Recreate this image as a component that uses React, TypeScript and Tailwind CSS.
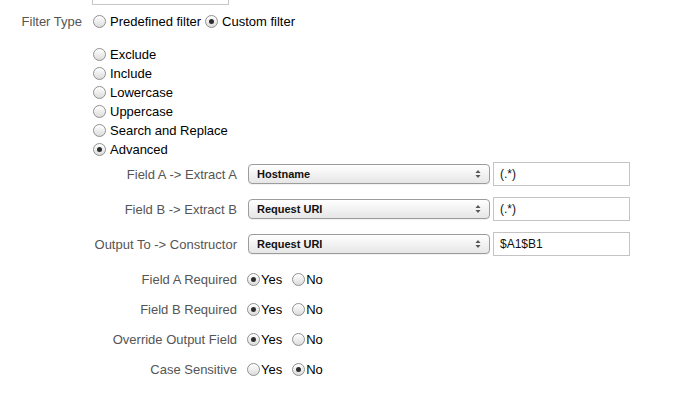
import React from "react";

const FONT = { fontFamily: '"Liberation Sans", Arial, sans-serif' };

function Radio({ checked }: { checked?: boolean }) {
  return (
    <span className="relative inline-flex h-[13px] w-[13px] shrink-0 items-center justify-center rounded-full border border-[#8f8f8f] bg-gradient-to-b from-white to-[#dcdcdc] shadow-[inset_0_1px_1px_rgba(255,255,255,0.9)]">
      {checked && <span className="h-[5px] w-[5px] rounded-full bg-[#2e2e2e]" />}
    </span>
  );
}

function RadioOption({ label, checked }: { label: string; checked?: boolean }) {
  return (
    <label className="flex items-center gap-[4px] text-black">
      <Radio checked={checked} />
      <span>{label}</span>
    </label>
  );
}

function SelectBox({ value }: { value: string }) {
  return (
    <div className="flex h-[20px] w-[242px] items-center justify-between rounded-[4px] border border-[#9c9c9c] bg-gradient-to-b from-white to-[#e6e6e6] pl-[8px] pr-[8px] shadow-[0_1px_0_rgba(0,0,0,0.05)]">
      <span className="text-[11px] font-bold text-[#111]">{value}</span>
      <svg width="6" height="10" viewBox="0 0 6 10">
        <path d="M3 1 L5.5 4 H0.5 Z" fill="#555" />
        <path d="M3 9 L5.5 6 H0.5 Z" fill="#555" />
      </svg>
    </div>
  );
}

function FieldRow({ label, select, text }: { label: string; select: string; text: string }) {
  return (
    <div className="flex h-[24px] items-center">
      <div className="w-[237px] text-right text-[#555]">{label}</div>
      <div className="ml-[11px] flex items-center gap-[3px]">
        <SelectBox value={select} />
        <div className="flex h-[24px] w-[137px] items-center border border-[#c4c4c4] bg-white px-[6px] text-[12px] text-[#111]">
          {text}
        </div>
      </div>
    </div>
  );
}

function YesNoRow({ label, yes }: { label: string; yes: boolean }) {
  return (
    <div className="flex h-[20px] items-center">
      <div className="w-[237px] text-right text-[#555]">{label}</div>
      <div className="ml-[10px] flex items-center">
        <label className="flex items-center gap-[1px] text-black">
          <Radio checked={yes} />
          <span>Yes</span>
        </label>
        <label className="ml-[10px] flex items-center gap-[1px] text-black">
          <Radio checked={!yes} />
          <span>No</span>
        </label>
      </div>
    </div>
  );
}

export default function App() {
  return (
    <div className="h-[400px] w-[686px] overflow-hidden bg-white text-[13px] leading-none" style={FONT}>
      <div className="ml-[92px] h-[5px] w-[137px] border border-t-0 border-[#c6c6c6]" />

      <div className="mt-[7px] flex h-[19px] items-center">
        <div className="w-[82px] text-right text-[#555]">Filter Type</div>
        <div className="ml-[11px] flex items-center gap-[4px]">
          <RadioOption label="Predefined filter" />
          <RadioOption label="Custom filter" checked />
        </div>
      </div>

      <div className="ml-[93px] mt-[14px] flex flex-col">
        {["Exclude", "Include", "Lowercase", "Uppercase", "Search and Replace", "Advanced"].map((o) => (
          <div key={o} className="flex h-[19px] items-center">
            <RadioOption label={o} checked={o === "Advanced"} />
          </div>
        ))}
      </div>

      <div className="mt-[3px] flex flex-col gap-[11px]">
        <FieldRow label="Field A -> Extract A" select="Hostname" text="(.*)" />
        <FieldRow label="Field B -> Extract B" select="Request URI" text="(.*)" />
        <FieldRow label="Output To -> Constructor" select="Request URI" text="$A1$B1" />
      </div>

      <div className="mt-[13px] flex flex-col gap-[10px]">
        <YesNoRow label="Field A Required" yes />
        <YesNoRow label="Field B Required" yes />
        <YesNoRow label="Override Output Field" yes />
        <YesNoRow label="Case Sensitive" yes={false} />
      </div>
    </div>
  );
}
